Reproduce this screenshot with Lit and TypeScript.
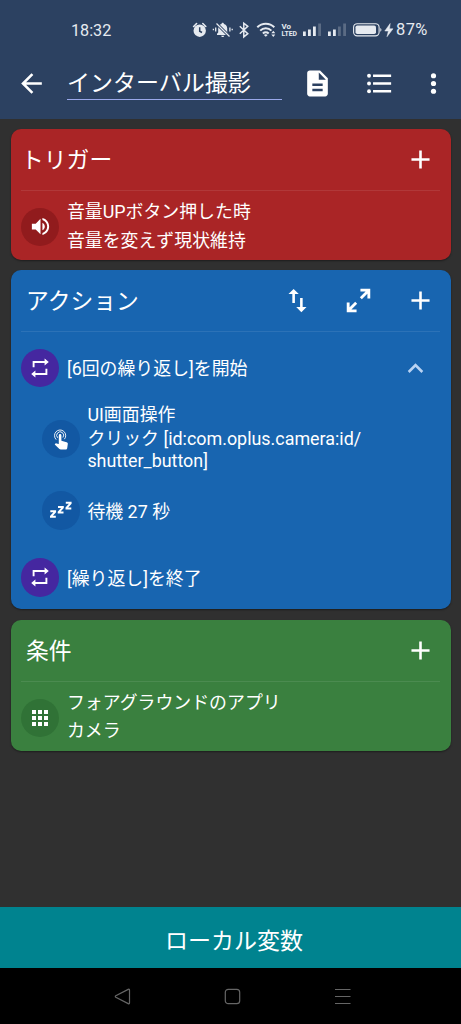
import { LitElement, html, svg, css } from "lit";
import { customElement, property } from "lit/decorators.js";

const glyphs: Record<string, unknown> = {
  back: svg`<path d="M20 11H7.83l5.59-5.59L12 4l-8 8 8 8 1.41-1.41L7.83 13H20z"/>`,
  doc: svg`<path d="M14 2H6c-1.1 0-1.99.9-1.99 2L4 20c0 1.1.89 2 1.99 2H18c1.1 0 2-.9 2-2V8l-6-6zm2 16H8v-2h8v2zm0-4H8v-2h8v2zm-3-5V3.5L18.5 9H13z"/>`,
  list: svg`<circle cx="3.9" cy="6" r="1.5"/><circle cx="3.9" cy="12" r="1.5"/><circle cx="3.9" cy="18" r="1.5"/><path d="M7 5h14v2H7zM7 11h14v2H7zM7 17h14v2H7z"/>`,
  more: svg`<circle cx="12" cy="6" r="2"/><circle cx="12" cy="12" r="2"/><circle cx="12" cy="18" r="2"/>`,
  add: svg`<path d="M19 13h-6v6h-2v-6H5v-2h6V5h2v6h6z"/>`,
  swap: svg`<path d="M16 17.01V10h-2v7.01h-3L15 21l4-3.99h-3zM9 3 5 6.99h3V14h2V6.99h3L9 3z"/>`,
  expand: svg`<path d="M13.500 4h6.500v6.500M19.800 4.200l-6 6M10.500 20H4v-6.500M4.200 19.800l6-6" fill="none" stroke="currentColor" stroke-width="2.200"/>`,
  up: svg`<path d="M12 8l-6 6 1.410 1.410L12 10.830l4.590 4.580L18 14z"/>`,
  volume: svg`<path d="M3 9v6h4l5 5V4L7 9H3zm13.5 3c0-1.77-1.02-3.29-2.5-4.03v8.05c1.48-.73 2.5-2.25 2.5-4.02zM14 3.23v2.06c2.89.86 5 3.54 5 6.71s-2.11 5.85-5 6.71v2.06c4.01-.91 7-4.49 7-8.77s-2.99-7.86-7-8.77z"/>`,
  repeat: svg`<path d="M5.600 11.200V6H17.500M18.400 12.800V18H6.500" fill="none" stroke="currentColor" stroke-width="1.900"/><path d="M16.600 2.400L20.800 6l-4.200 3.600zM7.400 14.400L3.200 18l4.200 3.600z"/>`,
  tap: svg`<g fill="none" stroke="currentColor" stroke-width=".9"><path d="M7.200 12.600A5.600 5.600 0 1 1 15.400 12.200"/><path d="M8.700 10.800A3.500 3.500 0 1 1 13.900 10.500"/></g><path d="M9.800 8.400a1.300 1.300 0 0 1 2.600 0v5.300l5.200 1.500c.9.300 1.300.8 1.200 1.700l-.6 4.300c-.2.900-.7 1.400-1.600 1.400h-4.900c-.5 0-.9-.2-1.300-.5l-4.700-4.600.6-.7c.4-.4.800-.5 1.200-.4l2.300.5z"/>`,
  sleep: svg`<path d="M1.300 13.200h4.800v.6L2 18.300v.5h4.800M9 9h4.800v.6l-4.100 4.500v.5h4.800M16.800 4.800h4.800v.6l-4.100 4.500v.5h4.800" fill="none" stroke="currentColor" stroke-width="2"/>`,
  grid: svg`<path d="M4 8h4V4H4v4zm6 12h4v-4h-4v4zm-6 0h4v-4H4v4zm0-6h4v-4H4v4zm6 0h4v-4h-4v4zm6-10v4h4V4h-4zm-6 4h4V4h-4v4zm6 6h4v-4h-4v4zm0 6h4v-4h-4v4z"/>`,
};

@customElement("ui-glyph")
export class UiGlyph extends LitElement {
  @property() name = "add";
  static styles = css`
    :host { display: block; width: 31px; height: 31px; flex: none; }
    svg { display: block; width: 100%; height: 100%; fill: currentColor; overflow: visible; }
  `;
  render() {
    return html`<svg viewBox="0 0 24 24">${glyphs[this.name]}</svg>`;
  }
}

@customElement("status-bar")
export class StatusBar extends LitElement {
  static styles = css`
    :host { display: flex; align-items: center; height: 60px; padding-left: 71px; color: #e6eaf0; }
    svg { display: block; height: 20px; flex: none; fill: currentColor; overflow: visible; }
    .time { width: 120px; font-size: 16.200px; line-height: 20px; padding-top: 1px; }
    .alarm { width: 22px; }
    .bell { width: 22px; }
    .bt { width: 22px; }
    .wifi { width: 24px; }
    .lte { width: 22px; }
    .signal { width: 25px; }
    .battery { width: 31px; }
    .bolt { width: 12px; }
    .pct { font-size: 16.500px; line-height: 20px; letter-spacing: .4px; }
    .tiny { font: 700 7.800px "Roboto", sans-serif; }
  `;
  render() {
    return html`
      <span class="time">18:32</span>
      <svg class="alarm" viewBox="0 0 22 20">
        <circle cx="8.700" cy="10.700" r="6.200"/>
        <path d="M2.600 6.500l3-3M14.800 6.500l-3-3" stroke="currentColor" stroke-width="1.600" stroke-linecap="round"/>
        <path d="M8.700 7.200v4l2.300 1.300" fill="none" stroke="#2c4161" stroke-width="1.500"/>
      </svg>
      <svg class="bell" viewBox="0 0 22 20">
        <path d="M4 15v-1.300l1.200-1.300V8.500c0-2.400 1.500-4 3.300-4.400 0-1.700 2.400-1.700 2.400 0 1.900.4 3.300 2 3.300 4.400v3.900l1.200 1.300V15zM8.200 15.800h3c0 1.700-3 1.700-3 0z"/>
        <path d="M3.500 3.500L16.500 16.500" stroke="#2c4161" stroke-width="3"/>
        <path d="M3.500 3.500L16.500 16.500" stroke="currentColor" stroke-width="1.300"/>
        <path d="M2.700 7.500v4M.4 8.700v1.600M16.900 7.500v4M19.200 8.700v1.600" stroke="currentColor" stroke-width="1.300"/>
      </svg>
      <svg class="bt" viewBox="0 0 22 20">
        <path d="M4.800 6.200l8 7.400-4 3.300V3.200l4 3.200-8 7.400" fill="none" stroke="currentColor" stroke-width="1.500"/>
      </svg>
      <svg class="wifi" viewBox="0 0 24 20">
        <g fill="none" stroke="currentColor" stroke-width="2">
          <path d="M.3 7.300a12 12 0 0 1 17 0"/><path d="M3.200 10.600a8 8 0 0 1 11.200 0"/><path d="M5.900 13.500a4.200 4.200 0 0 1 5.800 0"/>
        </g>
        <path d="M6.900 14.900q1.900-1.500 3.800 0l-1.900 1.800zM14.300 13.200l2-2.400 2 2.400zM14.300 14.600l2 2.400 2-2.400z"/>
      </svg>
      <svg class="lte" viewBox="0 0 22 20">
        <text class="tiny"><tspan x=".5" y="8.700" textLength="9.500" lengthAdjust="spacingAndGlyphs">Vo</tspan><tspan x=".5" y="16" textLength="15.500" lengthAdjust="spacingAndGlyphs">LTED</tspan></text>
      </svg>
      <svg class="signal" viewBox="0 0 25 20">
        <path d="M0 11.500h2.800V16H0zM5 9.500h2.800V16H5zM10 6.500h2.800V16H10z"/><path opacity=".25" d="M15.200 3.500H18V16h-2.800z"/>
      </svg>
      <svg class="signal" viewBox="0 0 25 20">
        <path d="M0 11.500h2.800V16H0zM5 9.500h2.800V16H5z"/><path opacity=".25" d="M10 6.500h2.800V16H10zM15.200 3.500H18V16h-2.800z"/>
      </svg>
      <svg class="battery" viewBox="0 0 31 20">
        <rect x=".6" y="3.700" width="25.500" height="12.200" rx="3.600" fill="none" stroke="currentColor" stroke-width="1.100"/>
        <rect x="2.500" y="5.500" width="20.500" height="8.600" rx="1.800"/><path d="M27.300 8c1.500.5 1.500 3.200 0 3.700z"/>
      </svg>
      <svg class="bolt" viewBox="0 0 12 20"><path d="M6.200 3.500L.8 11h3.600L3 16.700 9 8.800H5.500z" stroke="currentColor" stroke-width=".5"/></svg>
      <span class="pct">87%</span>
    `;
  }
}

@customElement("macro-item")
export class MacroItem extends LitElement {
  @property() icon = "";
  static styles = css`
    :host { display: flex; align-items: center; gap: 7.500px; }
    .disc { display: grid; place-items: center; width: 38.400px; height: 38.400px; border-radius: 50%; background: var(--disc); flex: none; }
    ui-glyph { width: 24px; height: 24px; }
    :host([icon="volume"]) ui-glyph { width: 23px; height: 23px; }
    :host(.pair) .disc { margin-top: 1.500px; }
    .text { flex: 1; min-width: 0; white-space: nowrap; }
  `;
  render() {
    return html`<div class="disc"><ui-glyph name=${this.icon}></ui-glyph></div><div class="text"><slot></slot></div>`;
  }
}

@customElement("app-root")
export class AppRoot extends LitElement {
  static styles = css`
    :host {
      display: flex; flex-direction: column; height: 1024px; background: #303030; color: #fff;
      font-family: Roboto, "Noto Sans CJK JP", sans-serif;
    }
    header { height: 119px; background: #2c4161; flex: none; }
    .toolbar { display: flex; align-items: center; height: 46px; padding: 0 12px 0 15.600px; }
    .name { width: 215px; height: 34px; margin: 0 20.400px 0 20.400px; box-sizing: border-box; border-bottom: 1px solid #9aa8ea; padding-top: 1px; font-size: 23px; line-height: 34px; white-space: nowrap; }
    .tools { display: flex; align-items: center; }
    .list { margin-left: 30.500px; }
    .more { margin-left: 22.800px; }
    main { flex: 1; display: flex; flex-direction: column; gap: 10.400px; padding: 10px 10.500px 0; }
    section { border-radius: 10px; padding: 0 10.500px; box-sizing: border-box; box-shadow: 0 1px 2px rgba(0, 0, 0, .4); }
    .trigger { background: #aa2526; height: 131px; --disc: #911b1d; }
    .action { background: #1865b0; height: 339px; --disc: #1258a3; }
    .cond { background: #3a803f; height: 131px; --disc: #307236; }
    .head { display: flex; align-items: center; height: 62px; box-sizing: border-box; padding: 0 4.500px 0 5px; border-bottom: 1px solid rgba(255, 255, 255, .09); }
    .head h2 { flex: 1; margin: 0; padding-top: 2.500px; font-size: 22.800px; font-weight: 400; line-height: 34px; }
    .trigger .head { padding-left: 0; }
    .swap { margin-right: 30px; }
    .expand { margin-right: 31px; }
    .line { display: block; font-size: 17.900px; line-height: 28.500px; }
    .pair { margin-top: 7px; }
    .trigger .line:last-child { line-height: 27.500px; }
    .loop { --disc: #4527a0; display: flex; align-items: center; height: 38.400px; }
    .loop macro-item { flex: 1; }
    .loop .line, .wait .line { padding-top: 3px; }
    .start { margin-top: 16.500px; }
    .up { color: #b9d3f3; margin-right: 9px; }
    .child { margin-left: 20.500px; }
    .click { margin-top: 17.500px; height: 68px; }
    .click .line { line-height: 22px; }
    .click .line:first-child { line-height: 26px; }
    .click .line:last-child { padding-bottom: 3px; }
    .wait { margin-top: 18.500px; }
    .end { margin-top: 28.500px; }
    .vars { display: flex; align-items: center; justify-content: center; height: 61px; box-sizing: border-box; padding: 2px 0 0 7px; background: #00838f; font-size: 23px; flex: none; }
    nav { display: flex; align-items: center; justify-content: space-between; height: 56px; box-sizing: border-box; padding: 0 110px 0 114px; background: #000; flex: none; }
    nav svg { display: block; width: 17px; height: 17px; fill: none; stroke: #666; stroke-width: 1.200; }
  `;
  render() {
    return html`
      <header>
        <status-bar></status-bar>
        <div class="toolbar">
          <ui-glyph name="back"></ui-glyph>
          <div class="name">インターバル撮影</div>
          <div class="tools">
            <ui-glyph name="doc"></ui-glyph>
            <ui-glyph class="list" name="list"></ui-glyph>
            <ui-glyph class="more" name="more"></ui-glyph>
          </div>
        </div>
      </header>
      <main>
        <section class="trigger">
          <div class="head"><h2>トリガー</h2><ui-glyph name="add"></ui-glyph></div>
          <macro-item class="pair" icon="volume">
            <span class="line">音量UPボタン押した時</span><span class="line">音量を変えず現状維持</span>
          </macro-item>
        </section>
        <section class="action">
          <div class="head">
            <h2>アクション</h2>
            <ui-glyph class="swap" name="swap"></ui-glyph>
            <ui-glyph class="expand" name="expand"></ui-glyph>
            <ui-glyph name="add"></ui-glyph>
          </div>
          <div class="loop start">
            <macro-item icon="repeat"><span class="line">[6回の繰り返し]を開始</span></macro-item>
            <ui-glyph class="up" name="up"></ui-glyph>
          </div>
          <macro-item class="child click" icon="tap">
            <span class="line">UI画面操作</span><span class="line">クリック [id:com.oplus.camera:id/</span><span class="line">shutter_button]</span>
          </macro-item>
          <macro-item class="child wait" icon="sleep"><span class="line">待機 27 秒</span></macro-item>
          <div class="loop end">
            <macro-item icon="repeat"><span class="line">[繰り返し]を終了</span></macro-item>
          </div>
        </section>
        <section class="cond">
          <div class="head"><h2>条件</h2><ui-glyph name="add"></ui-glyph></div>
          <macro-item class="pair" icon="grid">
            <span class="line">フォアグラウンドのアプリ</span><span class="line">カメラ</span>
          </macro-item>
        </section>
      </main>
      <div class="vars">ローカル変数</div>
      <nav>
        <svg viewBox="0 0 17 17"><path d="M15.500 2.200v12.600q0 1.500-1.300.8L1.800 9.300q-1-.8 0-1.500l12.400-6.400q1.300-.7 1.300.8z"/></svg>
        <svg viewBox="0 0 17 17"><rect x="1.300" y="1.300" width="14.400" height="14.400" rx="3"/></svg>
        <svg viewBox="0 0 17 17"><path d="M1 1.500h15.500M1 8.500h15.500M1 15.500h15.500"/></svg>
      </nav>
    `;
  }
}
